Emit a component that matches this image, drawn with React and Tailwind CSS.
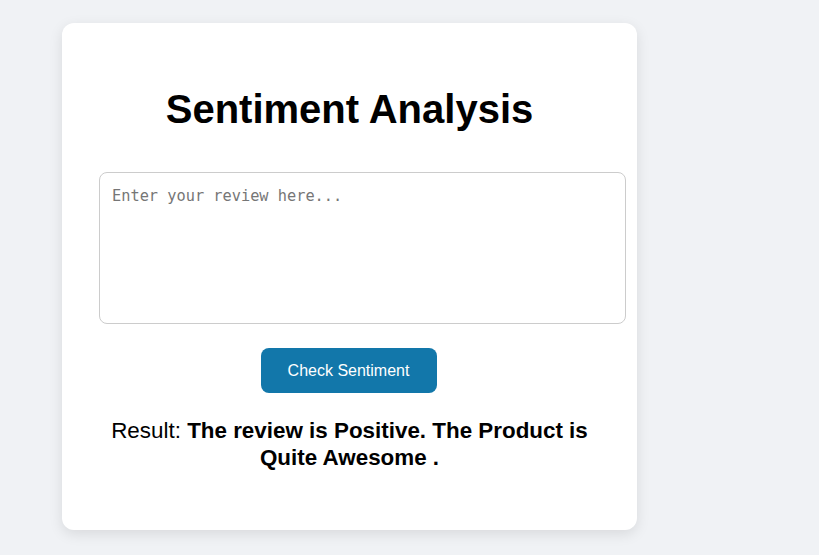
import React, { useState } from 'react';

const App = () => {
    const [review, setReview] = useState('');

    return (
        <div className="min-h-[555px] w-full bg-[#f0f2f5] pt-[23px] pl-[62px] font-['Liberation_Sans',Arial,sans-serif] text-black">
            <div className="w-[575px] h-[507px] bg-white rounded-[12px] shadow-[0_4px_14px_rgba(0,0,0,0.1)] px-[37px] pt-[63px] flex flex-col items-center">
                <h1 className="text-[40px] leading-[46px] font-bold text-center">Sentiment Analysis</h1>

                <textarea
                    value={review}
                    onChange={(e) => setReview(e.target.value)}
                    placeholder="Enter your review here..."
                    className="mt-[40px] self-start shrink-0 w-[527px] h-[152px] border border-[#cccccc] rounded-[8px] px-3 pt-3 text-[15.3px] font-['DejaVu_Sans_Mono',monospace] placeholder:text-[#767676] resize-none outline-none"
                />

                <button className="mt-[24px] -ml-[2px] w-[176px] h-[45px] rounded-[8px] bg-[#1277aa] text-white text-[16px]">
                    Check Sentiment
                </button>

                <p className="mt-[24px] w-[501px] text-center text-[22.4px] leading-[27px]">
                    Result: <b>The review is Positive. The Product is Quite Awesome .</b>
                </p>
            </div>
        </div>
    );
};

export default App;
